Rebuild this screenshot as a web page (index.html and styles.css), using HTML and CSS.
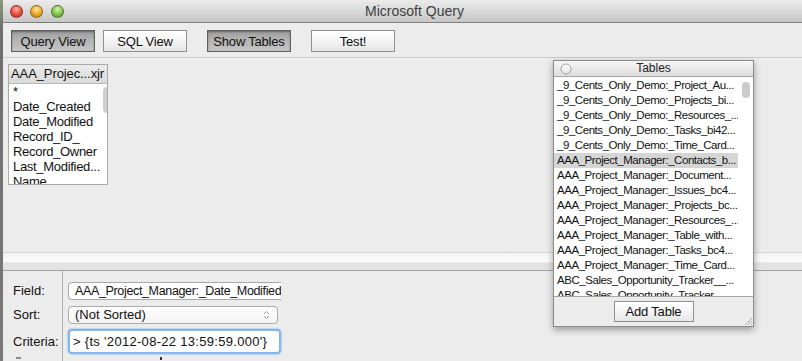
FILE: index.html
```html
<!DOCTYPE html>
<html>
<head>
<meta charset="utf-8">
<title>Microsoft Query</title>
<link rel="stylesheet" href="styles.css">
</head>
<body>
<div class="desk">
  <div class="strip"></div>
  <div class="window">
    <div class="titlebar">
      <div class="lights">
        <span class="light red"></span>
        <span class="light yellow"></span>
        <span class="light green"></span>
      </div>
      <div class="title">Microsoft Query</div>
    </div>
    <div class="toolbar">
      <button class="btn pressed">Query View</button>
      <button class="btn">SQL View</button>
      <button class="btn pressed wide-gap">Show Tables</button>
      <button class="btn wide-gap">Test!</button>
    </div>
    <div class="canvas">
      <div class="tbox">
        <div class="tbox-head">AAA_Projec...xjr</div>
        <div class="tbox-body">
          <ul class="tbox-list">
            <li>*</li>
            <li>Date_Created</li>
            <li>Date_Modified</li>
            <li>Record_ID_</li>
            <li>Record_Owner</li>
            <li>Last_Modified...</li>
            <li>Name</li>
          </ul>
          <div class="vscroll"><div class="thumb"></div></div>
        </div>
      </div>
    </div>
    <div class="splitter">
      <div class="split-light"></div>
      <div class="split-dark"></div>
    </div>
    <div class="criteria">
      <div class="labels">
        <div class="lab r1">Field:</div>
        <div class="lab r2">Sort:</div>
        <div class="lab r3">Criteria:</div>
        <div class="r4"><span class="mark"></span></div>
      </div>
      <div class="fields">
        <div class="field r1"><span class="field-text">AAA_Project_Manager:_Date_Modified</span></div>
        <div class="select r2">
          <span class="select-text">(Not Sorted)</span>
          <svg class="updown" width="7" height="10" viewBox="0 0 7 10"><path d="M1 4 L3.5 1.5 L6 4" fill="none" stroke="#9a9a9a" stroke-width="1"/><path d="M1 6 L3.5 8.5 L6 6" fill="none" stroke="#9a9a9a" stroke-width="1"/></svg>
        </div>
        <div class="focus r3"><span class="focus-text">&gt; {ts '2012-08-22 13:59:59.000'}</span></div>
        <div class="r4"><span class="tick"></span></div>
      </div>
    </div>
  </div>
</div>

<div class="palette">
  <div class="pal-head">
    <svg class="pal-close" width="12" height="12" viewBox="0 0 12 12"><defs><linearGradient id="cg" x1="0" y1="0" x2="0" y2="1"><stop offset="0" stop-color="#ffffff"/><stop offset="1" stop-color="#e2e2e2"/></linearGradient></defs><circle cx="6" cy="6" r="5" fill="url(#cg)" stroke="#a4a4a4" stroke-width="1"/></svg>
    <span class="pal-title">Tables</span>
  </div>
  <div class="pal-body">
    <ul class="pal-list">
      <li>_9_Cents_Only_Demo:_Project_Au...</li>
      <li>_9_Cents_Only_Demo:_Projects_bi...</li>
      <li>_9_Cents_Only_Demo:_Resources_...</li>
      <li>_9_Cents_Only_Demo:_Tasks_bi42...</li>
      <li>_9_Cents_Only_Demo:_Time_Card...</li>
      <li class="sel">AAA_Project_Manager:_Contacts_b...</li>
      <li>AAA_Project_Manager:_Document...</li>
      <li>AAA_Project_Manager:_Issues_bc4...</li>
      <li>AAA_Project_Manager:_Projects_bc...</li>
      <li>AAA_Project_Manager:_Resources_...</li>
      <li>AAA_Project_Manager:_Table_with...</li>
      <li>AAA_Project_Manager:_Tasks_bc4...</li>
      <li>AAA_Project_Manager:_Time_Card...</li>
      <li>ABC_Sales_Opportunity_Tracker__...</li>
      <li>ABC_Sales_Opportunity_Tracker_...</li>
    </ul>
    <div class="pal-scroll"><div class="pal-thumb"></div></div>
  </div>
  <div class="pal-foot">
    <button class="btn add">Add Table</button>
    <svg class="grip" width="10" height="10" viewBox="0 0 10 10"><path d="M9 2 L2 9 M9 5 L5 9 M9 8 L8 9" stroke="#a8a8a8" stroke-width="1" fill="none"/></svg>
  </div>
</div>
</body>
</html>
```

FILE: styles.css
```css
* { box-sizing: border-box; }
html, body {
  margin: 0;
  padding: 0;
  width: 802px;
  height: 361px;
  overflow: hidden;
  background: #ececec;
  font-family: "Liberation Sans", Arial, sans-serif;
  font-size: 13px;
  color: #111;
}
ul { list-style: none; margin: 0; padding: 0; }

.desk {
  display: flex;
  height: 361px;
}
.strip {
  width: 3px;
  flex: none;
  background: linear-gradient(to bottom, #8a9a7a 0, #6e6e6e 30px, #7a7a7a 100%);
}
.window {
  flex: 1;
  display: flex;
  flex-direction: column;
  background: #ececec;
  border-top-left-radius: 4px;
  overflow: hidden;
}

/* title bar */
.titlebar {
  height: 23px;
  flex: none;
  display: flex;
  align-items: center;
  background: linear-gradient(to bottom, #ebebeb 0, #d9d9d9 50%, #c6c6c6 100%);
  border-bottom: 1px solid #7e7e7e;
}
.lights {
  width: 66px;
  display: flex;
  gap: 7.5px;
  padding-left: 6.5px;
  padding-top: 1px;
}
.light {
  width: 13px;
  height: 13px;
  border-radius: 50%;
  display: block;
  border: 1px solid rgba(0,0,0,0.35);
}
.red { background: radial-gradient(circle at 50% 30%, #ffb5ad 0, #ef5a4c 45%, #b3231a 100%); }
.yellow { background: radial-gradient(circle at 50% 30%, #ffe8a8 0, #f2b233 45%, #b97a0e 100%); }
.green { background: radial-gradient(circle at 50% 30%, #d8f5b0 0, #8dcc55 45%, #4c8f22 100%); }
.title {
  flex: 1;
  text-align: center;
  padding-right: 42px;
  font-size: 14px;
  color: #3e3e3e;
}

/* toolbar */
.toolbar {
  height: 35px;
  flex: none;
  display: flex;
  align-items: flex-start;
  padding: 7px 0 0 8px;
  gap: 8px;
  border-bottom: 1px solid #cfcfcf;
}
.btn {
  font-family: "Liberation Sans", Arial, sans-serif;
  font-size: 13px;
  letter-spacing: -0.2px;
  color: #111;
  height: 22px;
  width: 84px;
  padding: 0;
  border: 1px solid #8f8f8f;
  border-radius: 0;
  background: linear-gradient(to bottom, #ffffff 0, #f4f4f4 50%, #e6e6e6 100%);
  box-shadow: inset 0 1px 0 #ffffff;
}
.btn.pressed {
  border-color: #5f5f5f;
  background: linear-gradient(to bottom, #9c9c9c 0, #b2b2b2 40%, #c4c4c4 100%);
  box-shadow: inset 0 1px 2px rgba(0,0,0,0.35);
}
.btn.wide-gap { margin-left: 12px; }

/* design canvas */
.canvas {
  height: 194px;
  flex: none;
  padding: 6px 0 0 5px;
}
.tbox {
  width: 100px;
  height: 121px;
  border: 1px solid #a9a9a9;
  display: flex;
  flex-direction: column;
  background: #fff;
}
.tbox-head {
  height: 19px;
  flex: none;
  line-height: 18px;
  padding-left: 2px;
  white-space: nowrap;
  overflow: hidden;
  letter-spacing: -0.1px;
  background: linear-gradient(to bottom, #ebebeb, #dadada);
  border-bottom: 1px solid #b8b8b8;
}
.tbox-body {
  flex: 1;
  display: flex;
  overflow: hidden;
}
.tbox-list {
  flex: 1;
  padding-left: 4px;
}
.tbox-list li {
  height: 15px;
  line-height: 15px;
  white-space: nowrap;
  letter-spacing: -0.3px;
}
.vscroll {
  width: 14px;
  flex: none;
  padding: 3px 2px 0 3px;
}
.thumb {
  width: 8px;
  height: 26px;
  border-radius: 4px;
  background: #cdcdcd;
}

/* splitter */
.splitter {
  flex: none;
  border-top: 1px solid #d6d6d6;
  border-bottom: 1px solid #a3a3a3;
}
.split-light { height: 9px; background: linear-gradient(to bottom, #f4f4f4, #fbfbfb); }
.split-dark { height: 8px; background: #e3e3e3; border-top: 1px solid #e9e9e9; }

/* criteria pane */
.criteria {
  flex: 1;
  display: flex;
}
.labels {
  width: 60px;
  flex: none;
  border-right: 1px solid #b2b2b2;
  padding: 11px 0 0 10px;
}
.lab { white-space: nowrap; }
.r1 { height: 18px; line-height: 18px; }
.r2 { height: 18px; line-height: 18px; margin-top: 6px; }
.r3 { height: 25px; line-height: 25px; margin-top: 5px; }
.r4 { height: 8px; margin-top: 3px; }
.mark {
  display: block;
  width: 5px;
  height: 2px;
  margin: 1px 0 0 3px;
  background: #8a8a8a;
}
.fields {
  flex: 1;
  padding: 11px 0 0 5px;
}
.field {
  width: 213px;
  background: #fff;
  border: 1px solid #a9a9a9;
  border-right: none;
  border-radius: 4px 0 0 4px;
  padding-left: 6px;
  overflow: hidden;
  white-space: nowrap;
  line-height: 16px;
  font-size: 12.5px;
  letter-spacing: -0.35px;
}
.select {
  width: 210px;
  display: flex;
  align-items: center;
  justify-content: space-between;
  border: 1px solid #ababab;
  border-radius: 4px;
  background: linear-gradient(to bottom, #ffffff 0, #f3f3f3 100%);
  padding: 0 7px 0 6px;
  line-height: 16px;
}
.updown { display: block; }
.focus {
  width: 213px;
  border: 2px solid #86b5e6;
  border-radius: 4px;
  box-shadow: 0 0 1px 1px #b9d6f3;
  background: #fff;
  padding-left: 3px;
  line-height: 21px;
  white-space: nowrap;
  overflow: hidden;
  letter-spacing: 0.3px;
}
.tick {
  display: block;
  width: 2px;
  height: 3px;
  background: #333;
  margin: 2px 0 0 92px;
}

/* floating Tables palette */
.palette {
  position: absolute;
  left: 553px;
  top: 60px;
  width: 201px;
  height: 267px;
  border: 1px solid #8c8c8c;
  background: #ececec;
  box-shadow: 0 3px 7px rgba(0,0,0,0.35);
  display: flex;
  flex-direction: column;
  font-size: 12px;
}
.pal-head {
  height: 16px;
  flex: none;
  display: flex;
  align-items: center;
  background: linear-gradient(to bottom, #f6f6f6, #dedede);
  border-bottom: 1px solid #a6a6a6;
  padding-left: 6px;
}
.pal-close { display: block; flex: none; }
.pal-title {
  flex: 1;
  text-align: center;
  padding-right: 18px;
  color: #222;
  line-height: 15px;
}
.pal-body {
  height: 219px;
  flex: none;
  display: flex;
  background: #fff;
  overflow: hidden;
}
.pal-list { flex: 1; overflow: hidden; }
.pal-list li {
  height: 15px;
  line-height: 15px;
  padding-left: 3px;
  white-space: nowrap;
  font-size: 11.5px;
  letter-spacing: -0.45px;
}
.pal-list li:first-child { margin-top: 1px; }
.pal-list li.sel { background: #d5d5d5; }
.pal-scroll {
  width: 15px;
  flex: none;
  padding: 5px 3px 0 4px;
}
.pal-thumb {
  width: 8px;
  height: 16px;
  border-radius: 4px;
  background: #cbcbcb;
}
.pal-foot {
  flex: 1;
  border-top: 1px solid #a6a6a6;
  display: flex;
  justify-content: center;
  align-items: flex-start;
  padding-top: 4px;
  position: relative;
}
.btn.add {
  width: 80px;
  height: 21px;
  font-size: 13px;
}
.grip {
  position: absolute;
  right: 0;
  bottom: 0;
}
```
